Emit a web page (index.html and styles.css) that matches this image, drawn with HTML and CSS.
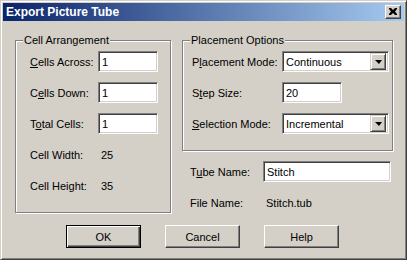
FILE: index.html
```html
<!DOCTYPE html>
<html lang="en">
<head>
  <meta charset="UTF-8">
  <title>Export Picture Tube</title>
  <link rel="stylesheet" href="styles.css">
</head>
<body>
  <div class="window">
    <div class="titlebar">
      <span class="title">Export Picture Tube</span>
      <button class="close">
        <svg width="8" height="7" viewBox="0 0 8 7"><path d="M0 0h2l2 2 2-2h2v1L6 3.5 8 6v1H6L4 5 2 7H0V6l2-2.5L0 1z" fill="#000"/></svg>
      </button>
    </div>

    <div class="main">
      <div class="group cells">
        <span class="group-title">Cell Arrangement</span>
        <div class="row"><label><u>C</u>ells Across:</label><input class="edit short" value="1"></div>
        <div class="row"><label>C<u>e</u>lls Down:</label><input class="edit short" value="1"></div>
        <div class="row"><label>T<u>o</u>tal Cells:</label><input class="edit short" value="1"></div>
        <div class="row"><label>Cell Width:</label><span class="value">25</span></div>
        <div class="row"><label>Cell Height:</label><span class="value">35</span></div>
      </div>

      <div class="side">
        <div class="group placement">
          <span class="group-title">Placement Options</span>
          <div class="row"><label>P<u>l</u>acement Mode:</label>
            <div class="combo"><span>Continuous</span><span class="drop"><i></i></span></div>
          </div>
          <div class="row"><label>S<u>t</u>ep Size:</label><input class="edit short" value="20"></div>
          <div class="row"><label><u>S</u>election Mode:</label>
            <div class="combo"><span>Incremental</span><span class="drop"><i></i></span></div>
          </div>
        </div>
        <div class="file">
          <div class="row"><label>T<u>u</u>be Name:</label><input class="edit long" value="Stitch"></div>
          <div class="row"><label>File Name:</label><span class="value">Stitch.tub</span></div>
        </div>
      </div>
    </div>

    <div class="buttons">
      <button class="btn default">OK</button>
      <button class="btn">Cancel</button>
      <button class="btn">Help</button>
    </div>
  </div>
</body>
</html>
```

FILE: styles.css
```css
* {
  margin: 0;
  padding: 0;
  box-sizing: border-box;
  font-family: 'Liberation Sans', Arial, sans-serif;
  font-size: 11px;
}
body {
  background: #d4d0c8;
  overflow: hidden;
}
u {
  text-decoration: underline;
  text-underline-offset: 1px;
}
.window {
  width: 407px;
  height: 260px;
  background: #d4d0c8;
  border: 1px solid;
  border-color: #d4d0c8 #404040 #404040 #d4d0c8;
  box-shadow: inset 1px 1px #fff, inset -1px -1px #808080;
  padding: 2px;
}
.titlebar {
  height: 18px;
  background: linear-gradient(to right, #0a246a, #a6caf0);
  display: flex;
  align-items: center;
  justify-content: space-between;
  padding: 0 3px 0 3px;
}
.title {
  color: #fff;
  font-weight: bold;
  font-size: 12px;
}
.close {
  width: 16px;
  height: 14px;
  background: #d4d0c8;
  border: 1px solid;
  border-color: #fff #404040 #404040 #fff;
  box-shadow: inset -1px -1px #808080;
  display: flex;
  align-items: center;
  justify-content: center;
  padding: 0 1px 1px 0;
}
.main {
  display: flex;
  align-items: flex-start;
  gap: 11px;
  padding: 19px 0 0 12px;
}
.group {
  position: relative;
  border: 1px solid #808080;
  box-shadow: inset 1px 1px #fff, 1px 1px #fff;
  display: flex;
  flex-direction: column;
  gap: 10px;
}
.group-title {
  position: absolute;
  top: -7px;
  left: 7px;
  padding: 0 1px;
  background: #d4d0c8;
  line-height: 13px;
}
.cells {
  width: 156px;
  height: 173px;
  padding: 10px 0 0 14px;
}
.placement {
  width: 211px;
  height: 111px;
  padding: 10px 0 0 9px;
}
.row {
  display: flex;
  align-items: center;
  height: 21px;
}
.cells label {
  width: 68px;
}
.placement label {
  width: 90px;
}
.value {
  padding-left: 3px;
}
.edit {
  height: 21px;
  border: 1px solid;
  border-color: #808080 #fff #fff #808080;
  box-shadow: inset 1px 1px #404040, inset -1px -1px #d4d0c8;
  background: #fff;
  padding: 0 3px;
  outline: none;
  color: #000;
}
.short {
  width: 60px;
}
.long {
  width: 128px;
}
.combo {
  width: 107px;
  height: 21px;
  border: 1px solid;
  border-color: #808080 #fff #fff #808080;
  box-shadow: inset 1px 1px #404040, inset -1px -1px #d4d0c8;
  background: #fff;
  display: flex;
  align-items: center;
  justify-content: space-between;
  padding: 2px 2px 2px 3px;
}
.drop {
  width: 16px;
  height: 17px;
  background: #d4d0c8;
  border: 1px solid;
  border-color: #d4d0c8 #404040 #404040 #d4d0c8;
  box-shadow: inset 1px 1px #fff, inset -1px -1px #808080;
  display: flex;
  align-items: center;
  justify-content: center;
}
.drop i {
  width: 0;
  height: 0;
  border-left: 4px solid transparent;
  border-right: 3px solid transparent;
  border-top: 4px solid #000;
  margin-left: 1px;
}
.side {
  display: flex;
  flex-direction: column;
}
.file {
  display: flex;
  flex-direction: column;
  gap: 10px;
  padding: 10px 0 0 8px;
}
.file label {
  width: 73px;
}
.buttons {
  display: flex;
  gap: 24px;
  padding: 12px 0 0 63px;
}
.btn {
  width: 75px;
  height: 23px;
  background: #d4d0c8;
  border: 1px solid;
  border-color: #fff #404040 #404040 #fff;
  box-shadow: inset -1px -1px #808080;
  color: #000;
}
.btn.default {
  border: 1px solid #000;
  box-shadow: inset 1px 1px #fff, inset -1px -1px #404040, inset -2px -2px #808080;
}
```
